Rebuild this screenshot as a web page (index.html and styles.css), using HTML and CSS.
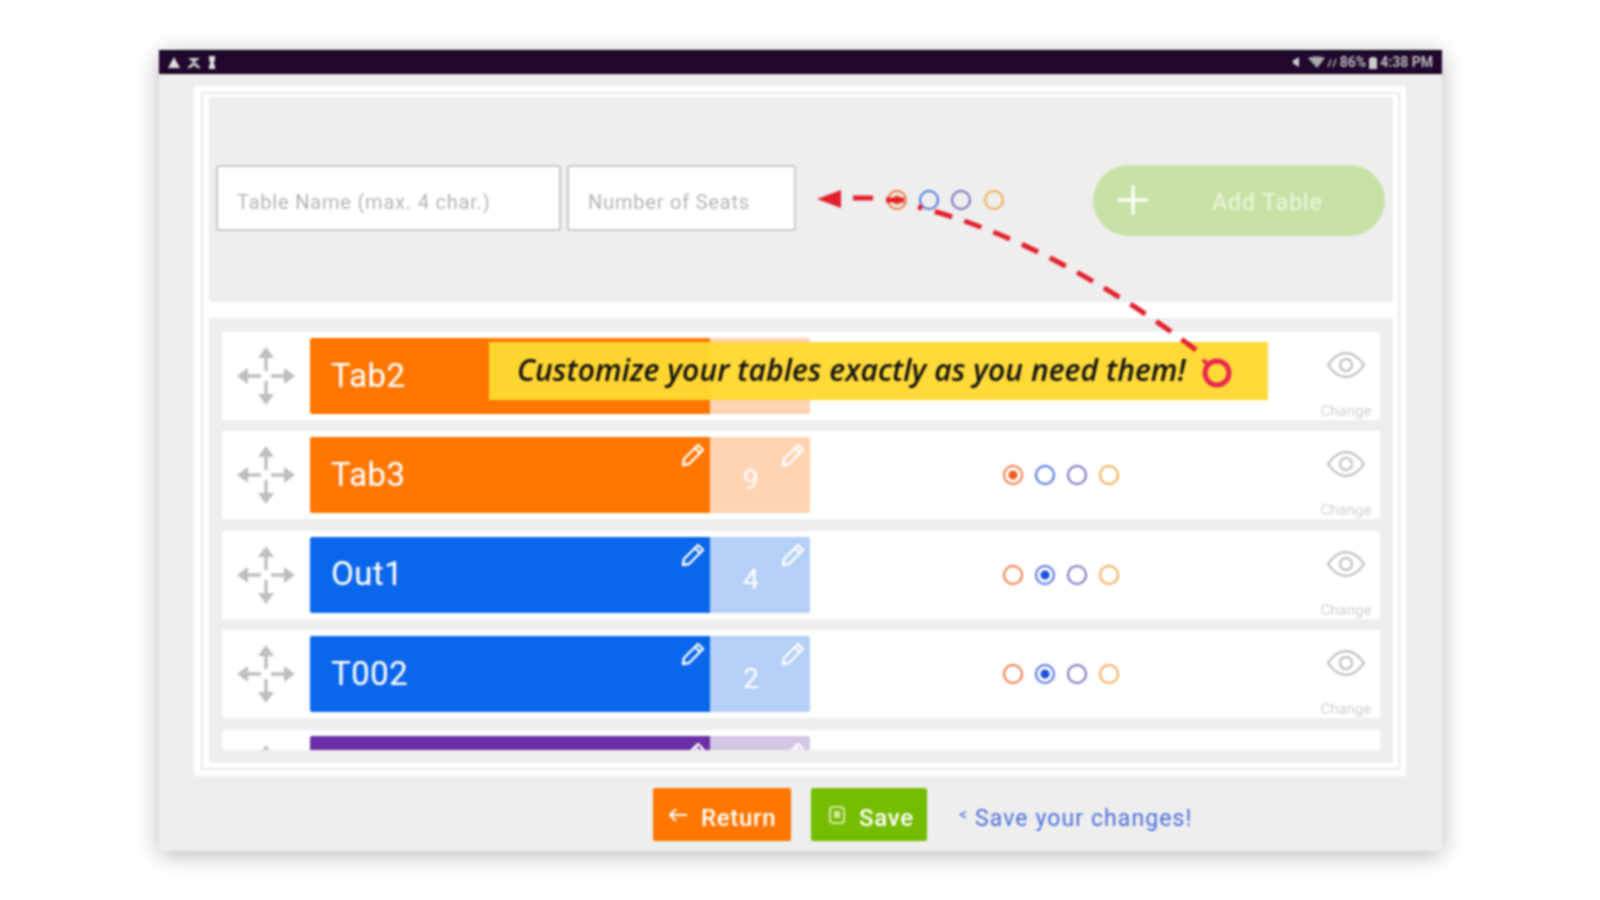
FILE: index.html
```html
<!DOCTYPE html>
<html lang="en">
<head>
    <meta charset="UTF-8">
    <title>Table Settings</title>
    <link rel="stylesheet" href="styles.css">
</head>
<body>

<svg class="icon-defs" width="0" height="0">
    <defs>
        <symbol id="move" viewBox="0 0 60 60">
            <path d="M30 6 V25 M30 35 V54 M6 30 H25 M35 30 H54" fill="none" stroke="#c0c0c0" stroke-width="3.5"/>
            <path d="M30 1 L22 12 H38 Z M30 59 L22 48 H38 Z M1 30 L12 22 V38 Z M59 30 L48 22 V38 Z" fill="#bebebe"/>
        </symbol>
        <symbol id="pencil" viewBox="0 0 26 26">
            <path d="M18 3 L23 8 L9 22 L3 23 L4 17 Z M15 6 L20 11" fill="none" stroke="currentColor" stroke-width="2.4" stroke-linejoin="round"/>
        </symbol>
        <symbol id="eye" viewBox="0 0 40 28">
            <path d="M2 14 C9 4 15 2 20 2 C25 2 31 4 38 14 C31 24 25 26 20 26 C15 26 9 24 2 14 Z" fill="none" stroke="#b8b8b8" stroke-width="2"/>
            <circle cx="20" cy="14" r="6" fill="none" stroke="#b8b8b8" stroke-width="2"/>
        </symbol>
    </defs>
</svg>

<div class="tablet">
    <div class="status-bar">
        <div class="status-left">
            <svg width="14" height="13" viewBox="0 0 14 13"><path d="M7 1 L13 12 H1 Z" fill="#ddd"/></svg>
            <svg width="16" height="13" viewBox="0 0 16 13"><path d="M2 2 H14 L8 7 Z M1 12 L6 7 H10 L15 12 H11 L8 9 L5 12 Z" fill="#ccc"/></svg>
            <svg width="10" height="15" viewBox="0 0 10 15"><path d="M2 1 H8 V6 H7 V10 H8 V14 H2 V10 H3 V6 H2 Z" fill="#ddd"/></svg>
        </div>
        <div class="status-right">
            <svg class="mute" width="8" height="12" viewBox="0 0 8 12"><path d="M7 1 V11 L2 8 H1 V4 H2 Z" fill="#ccc"/></svg>
            <svg class="wifi" width="30" height="13" viewBox="0 0 30 13"><path d="M1 2 C6 0 13 0 18 2 L10 12 Z" fill="#aaa"/><path d="M21 11 L24 3 M26 11 L29 3" stroke="#aaa" stroke-width="1.5"/></svg>
            <span>86%</span>
            <svg width="8" height="13" viewBox="0 0 8 13"><path d="M2 2 V1 H6 V2 H8 V13 H0 V2 Z" fill="#ccc"/></svg>
            <span>4:38 PM</span>
        </div>
    </div>

    <div class="frame">
        <div class="frame-inner">
            <div class="add-panel">
                <input class="field field-name" type="text" placeholder="Table Name (max. 4 char.)">
                <input class="field field-seats" type="text" placeholder="Number of Seats">
                <div class="radios radios-add">
                    <span class="radio r-orange checked"></span>
                    <span class="radio r-blue"></span>
                    <span class="radio r-purple"></span>
                    <span class="radio r-amber"></span>
                </div>
                <button class="add-btn">
                    <svg width="34" height="34" viewBox="0 0 34 34"><path d="M17 2 V32 M2 17 H32" stroke="#fff" stroke-width="3"/></svg>
                    <span>Add Table</span>
                </button>
            </div>

            <div class="table-list">
                <div class="table-scroll">
                    <div class="row">
                        <svg class="move"><use href="#move"/></svg>
                        <div class="bar orange"><span class="bar-name">Tab2</span></div>
                        <div class="seats orange-light"></div>
                        <div class="radios">
                            <span class="radio r-orange checked"></span>
                            <span class="radio r-blue"></span>
                            <span class="radio r-purple"></span>
                            <span class="radio r-amber"></span>
                        </div>
                        <div class="change"><svg class="eye"><use href="#eye"/></svg><span>Change</span></div>
                    </div>
                    <div class="row">
                        <svg class="move"><use href="#move"/></svg>
                        <div class="bar orange"><span class="bar-name">Tab3</span><svg class="pencil"><use href="#pencil"/></svg></div>
                        <div class="seats orange-light"><span class="seat-count">9</span><svg class="pencil"><use href="#pencil"/></svg></div>
                        <div class="radios">
                            <span class="radio r-orange checked"></span>
                            <span class="radio r-blue"></span>
                            <span class="radio r-purple"></span>
                            <span class="radio r-amber"></span>
                        </div>
                        <div class="change"><svg class="eye"><use href="#eye"/></svg><span>Change</span></div>
                    </div>
                    <div class="row">
                        <svg class="move"><use href="#move"/></svg>
                        <div class="bar blue"><span class="bar-name">Out1</span><svg class="pencil"><use href="#pencil"/></svg></div>
                        <div class="seats blue-light"><span class="seat-count">4</span><svg class="pencil"><use href="#pencil"/></svg></div>
                        <div class="radios">
                            <span class="radio r-orange"></span>
                            <span class="radio r-blue checked"></span>
                            <span class="radio r-purple"></span>
                            <span class="radio r-amber"></span>
                        </div>
                        <div class="change"><svg class="eye"><use href="#eye"/></svg><span>Change</span></div>
                    </div>
                    <div class="row">
                        <svg class="move"><use href="#move"/></svg>
                        <div class="bar blue"><span class="bar-name">T002</span><svg class="pencil"><use href="#pencil"/></svg></div>
                        <div class="seats blue-light"><span class="seat-count">2</span><svg class="pencil"><use href="#pencil"/></svg></div>
                        <div class="radios">
                            <span class="radio r-orange"></span>
                            <span class="radio r-blue checked"></span>
                            <span class="radio r-purple"></span>
                            <span class="radio r-amber"></span>
                        </div>
                        <div class="change"><svg class="eye"><use href="#eye"/></svg><span>Change</span></div>
                    </div>
                    <div class="row">
                        <svg class="move"><use href="#move"/></svg>
                        <div class="bar purple"><svg class="pencil"><use href="#pencil"/></svg></div>
                        <div class="seats purple-light"><svg class="pencil"><use href="#pencil"/></svg></div>
                    </div>
                </div>
            </div>
        </div>
    </div>

    <div class="actions">
        <button class="action-btn return-btn">
            <svg width="20" height="16" viewBox="0 0 20 16"><path d="M19 8 H2 M8 2 L2 8 L8 14" fill="none" stroke="#fff" stroke-width="2"/></svg>
            <span>Return</span>
        </button>
        <button class="action-btn save-btn">
            <svg width="16" height="18" viewBox="0 0 16 18"><rect x="1" y="1" width="14" height="16" rx="3" fill="none" stroke="#d5eaa8" stroke-width="2"/><rect x="5" y="5" width="6" height="7" fill="#d5eaa8"/></svg>
            <span>Save</span>
        </button>
        <div class="save-hint"><span class="hint-arrow">&lt;</span> Save your changes!</div>
    </div>

    <!-- banner and arrow lie over the form -->
    <div class="banner">Customize your tables exactly as you need them!</div>
    <svg class="callout" viewBox="159 50 1283 801">
        <path d="M1196 350 C1110 285 1010 230 918 207" fill="none" stroke="#e3202e" stroke-width="5" stroke-dasharray="18 13"/>
        <path d="M853 198 H873 M886 200 H904" fill="none" stroke="#e3202e" stroke-width="5"/>
        <path d="M817 199 L841 190 V208 Z" fill="#e3202e"/>
        <circle cx="1217" cy="373" r="12" fill="none" stroke="#e8264e" stroke-width="5"/>
        <path d="M1203 360 L1209 365" stroke="#e8264e" stroke-width="4"/>
    </svg>
</div>

</body>
</html>
```

FILE: styles.css
```css
body {
    margin: 0;
    padding: 50px 158px 0 159px;
    height: 900px;
    box-sizing: border-box;
    overflow: hidden;
    background-color: #fff;
    font-family: Roboto, "Liberation Sans", sans-serif;
}
.icon-defs {
    display: block;
    height: 0;
}
.tablet {
    position: relative;
    height: 801px;
    background-color: #eee;
    box-shadow: 0 4px 22px rgba(0, 0, 0, 0.28);
    filter: blur(0.9px);
}
.status-bar {
    height: 24px;
    background-color: #20082e;
    border-top: 1px solid #000;
    border-bottom: 1px solid #000;
    box-sizing: border-box;
    padding: 0 9px 0 8px;
    display: flex;
    justify-content: space-between;
    align-items: center;
    color: #bbb;
    font-size: 14px;
    font-weight: 700;
}
.status-left,
.status-right {
    display: flex;
    align-items: center;
    gap: 5px;
}
.status-right {
    gap: 3px;
}
.mute {
    margin-right: 4px;
}
.frame {
    margin: 12px 36px 0 35px;
    height: 690px;
    box-sizing: border-box;
    padding: 6px 6px 6px 7px;
    background-color: #fff;
}
.frame-inner {
    height: 100%;
    box-sizing: border-box;
    border: 2px solid #e8e8e8;
    padding: 3px 5px 0 6px;
}
.add-panel {
    height: 205px;
    box-sizing: border-box;
    padding: 0 8px 0 7px;
    border-radius: 4px;
    background-color: #eee;
    display: flex;
    align-items: center;
}
.field {
    height: 66px;
    box-sizing: border-box;
    margin-top: -3px;
    padding: 8px 0 0 19px;
    border: 2px solid #c8c8c8;
    border-radius: 3px;
    background-color: #fff;
    font-family: Roboto, "Liberation Sans", sans-serif;
    font-size: 20px;
    letter-spacing: 0.8px;
}
.field::placeholder {
    color: #b4b4b4;
}
.field-name {
    width: 345px;
}
.field-seats {
    width: 229px;
    margin-left: 6px;
}
.radios {
    display: flex;
    gap: 12.2px;
}
.radios-add {
    flex: none;
    margin-left: 91px;
}
.radio {
    width: 20px;
    height: 20px;
    box-sizing: border-box;
    border-radius: 50%;
    border: 2px solid;
    display: block;
}
.r-orange {
    border-color: #f4733f;
    color: #f15a1c;
}
.r-blue {
    border-color: #4c6fe2;
    color: #1a4fe0;
}
.r-purple {
    border-color: #7a6bbd;
}
.r-amber {
    border-color: #f5a84f;
}
.radio.checked {
    background: radial-gradient(circle, currentColor 0, currentColor 4px, transparent 5px);
}
.add-btn {
    margin-left: auto;
    margin-top: 1px;
    width: 292px;
    height: 71px;
    padding: 0 0 0 23px;
    border: none;
    border-radius: 36px;
    background-color: #c8e2a6;
    color: #eef6e0;
    font-family: Roboto, "Liberation Sans", sans-serif;
    font-size: 23px;
    letter-spacing: 1px;
    display: flex;
    align-items: center;
    gap: 62px;
}
.add-btn span {
    margin-top: 5px;
}
.table-list {
    margin-top: 16px;
    height: 445px;
    box-sizing: border-box;
    padding: 14px 13px 13px;
    background-color: #eee;
}
.table-scroll {
    height: 418px;
    overflow: hidden;
    display: flex;
    flex-direction: column;
    gap: 11.4px;
}
.row {
    flex: none;
    height: 88px;
    background-color: #fff;
    display: flex;
    align-items: center;
}
.move {
    flex: none;
    width: 60px;
    height: 60px;
    margin: 0 14px;
}
.bar,
.seats {
    position: relative;
    flex: none;
    height: 76px;
    box-sizing: border-box;
    color: #fff;
}
.bar {
    width: 400px;
    padding-left: 21px;
    border-radius: 2px 0 0 2px;
    display: flex;
    align-items: center;
}
.bar-name {
    font-size: 33px;
    letter-spacing: 0.4px;
    margin-top: -2px;
}
.seats {
    width: 100px;
    padding: 26px 0 0 33px;
    border-radius: 0 2px 2px 0;
}
.seat-count {
    font-size: 28px;
}
.pencil {
    position: absolute;
    top: 5px;
    right: 4px;
    width: 26px;
    height: 26px;
}
.orange {
    background-color: #ff7600;
}
.orange-light {
    background-color: #ffd4b3;
}
.blue {
    background-color: #0a66ea;
}
.blue-light {
    background-color: #b5d0f6;
}
.purple {
    background-color: #6a2fa5;
}
.purple-light {
    background-color: #d4c6e6;
}
.row .radios {
    flex: 1;
    justify-content: center;
}
.change {
    flex: none;
    width: 68px;
    align-self: stretch;
    display: flex;
    flex-direction: column;
    align-items: center;
    padding-top: 19px;
    box-sizing: border-box;
    color: #d2d2d2;
    font-size: 15px;
}
.eye {
    width: 40px;
    height: 28px;
    margin-bottom: 23px;
}
.actions {
    display: flex;
    align-items: center;
    height: 53px;
    margin-top: 12px;
    padding-left: 494px;
}
.action-btn {
    height: 53px;
    border: none;
    border-radius: 2px;
    color: #fff;
    font-family: Roboto, "Liberation Sans", sans-serif;
    font-size: 24px;
    font-weight: 500;
    letter-spacing: 0.7px;
    display: flex;
    align-items: center;
    padding: 0;
}
.action-btn span {
    margin-top: 6px;
}
.return-btn {
    width: 138px;
    padding-left: 15px;
    gap: 13px;
    background-color: #ff7600;
}
.save-btn {
    width: 116px;
    margin-left: 20px;
    padding-left: 18px;
    gap: 14px;
    background-color: #74bd00;
}
.save-hint {
    margin-left: 32px;
    margin-top: 8px;
    color: #4a6fdc;
    font-size: 23px;
    letter-spacing: 1.1px;
}
.hint-arrow {
    font-size: 16px;
    vertical-align: 6px;
}
.banner {
    position: absolute;
    left: 330px;
    top: 292px;
    width: 751px;
    height: 58px;
    padding-left: 28px;
    background-color: rgba(255, 216, 48, 0.96);
    color: #111;
    font-family: "Open Sans", sans-serif;
    font-size: 30px;
    font-style: italic;
    font-weight: 600;
    letter-spacing: 0.07px;
    line-height: 56px;
    white-space: nowrap;
}
.callout {
    position: absolute;
    left: 0;
    top: 0;
    width: 100%;
    height: 100%;
    pointer-events: none;
}
```
